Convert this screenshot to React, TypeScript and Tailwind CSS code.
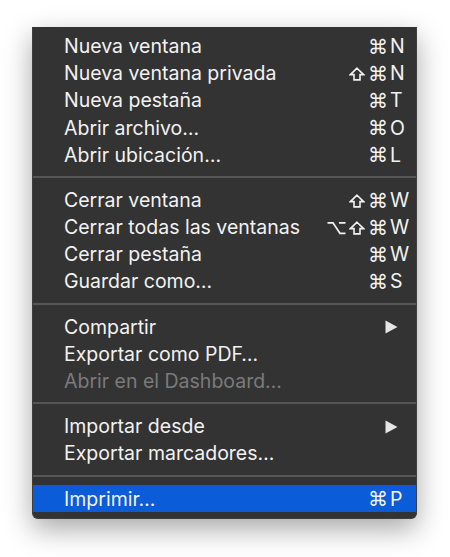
import React from 'react';

type Item = {
  label: string;
  mods?: string;
  keyChar?: string;
  submenu?: boolean;
  disabled?: boolean;
  active?: boolean;
};

const groups: Item[][] = [
  [
    { label: 'Nueva ventana', mods: 'c', keyChar: 'N' },
    { label: 'Nueva ventana privada', mods: 'sc', keyChar: 'N' },
    { label: 'Nueva pestaña', mods: 'c', keyChar: 'T' },
    { label: 'Abrir archivo…', mods: 'c', keyChar: 'O' },
    { label: 'Abrir ubicación…', mods: 'c', keyChar: 'L' },
  ],
  [
    { label: 'Cerrar ventana', mods: 'sc', keyChar: 'W' },
    { label: 'Cerrar todas las ventanas', mods: 'osc', keyChar: 'W' },
    { label: 'Cerrar pestaña', mods: 'c', keyChar: 'W' },
    { label: 'Guardar como…', mods: 'c', keyChar: 'S' },
  ],
  [
    { label: 'Compartir', submenu: true },
    { label: 'Exportar como PDF…' },
    { label: 'Abrir en el Dashboard…', disabled: true },
  ],
  [
    { label: 'Importar desde', submenu: true },
    { label: 'Exportar marcadores…' },
  ],
  [{ label: 'Imprimir…', mods: 'c', keyChar: 'P', active: true }],
];

const ShiftIcon = () => (
  <svg width="16" height="14" viewBox="0 0 16 14" className="mr-[3px]">
    <path
      d="M8 1.2 L14.6 7.6 L11 7.6 L11 12.9 L5 12.9 L5 7.6 L1.4 7.6 Z"
      fill="none"
      stroke="currentColor"
      strokeWidth="1.6"
      strokeLinejoin="miter"
    />
  </svg>
);

const OptionIcon = () => (
  <svg width="19" height="14" viewBox="0 0 19 14" className="mr-[3px]">
    <path d="M0.5 1.8 H6 L13 12.4 H18.5 M12 1.8 H18.5" fill="none" stroke="currentColor" strokeWidth="1.8" />
  </svg>
);

const Mods = ({ mods }: { mods: string }) => (
  <span className="flex items-center">
    {mods.includes('o') && <OptionIcon />}
    {mods.includes('s') && <ShiftIcon />}
    <span className="font-['DejaVu_Sans',sans-serif] text-[20px] leading-none">⌘</span>
  </span>
);

const MenuRow = ({ item }: { item: Item }) => (
  <div
    className={`flex items-center h-[27.2px] pt-[2px] pl-[31px] pr-[4px] ${
      item.active ? 'bg-[#0a5cd8]' : ''
    } ${item.disabled ? 'text-[#7b7b7b]' : 'text-[#f2f2f2]'}`}
  >
    <span className="flex-1 whitespace-nowrap">{item.label}</span>
    {item.submenu && (
      <span className="w-[27px] flex items-center">
        <svg width="13" height="14" viewBox="0 0 13 14">
          <path d="M0.5 0.5 L12.5 7 L0.5 13.5 Z" fill="#e6e6e6" />
        </svg>
      </span>
    )}
    {item.keyChar && (
      <>
        {item.mods && <Mods mods={item.mods} />}
        <span className="w-[24px] pl-[2px]">{item.keyChar}</span>
      </>
    )}
  </div>
);

export default function App() {
  return (
    <div className="w-[450px] h-[557px] bg-white font-['Inter',sans-serif] text-[19.5px]">
      <div className="pt-[27px] pl-[32px]">
        <div className="w-[385px] bg-[#333333] rounded-b-[6px] pt-[5px] pb-[6px] shadow-[0_10px_28px_rgba(0,0,0,0.35)] border-x border-b border-[#3e3e3e]">
          {groups.map((group, gi) => (
            <div key={gi}>
              {gi > 0 && (
                <div className="h-[18px] flex items-center">
                  <div className="h-[2px] w-full bg-[#565656]" />
                </div>
              )}
              {group.map((item, i) => (
                <MenuRow key={i} item={item} />
              ))}
            </div>
          ))}
        </div>
      </div>
    </div>
  );
}
